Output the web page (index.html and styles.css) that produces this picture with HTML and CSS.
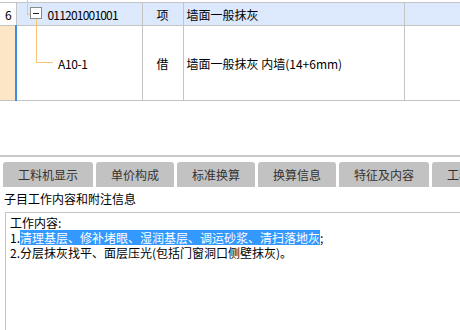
FILE: index.html
```html
<!DOCTYPE html>
<html lang="zh-CN">
<head>
    <meta charset="UTF-8">
    <title>子目工作内容</title>
    <link rel="stylesheet" href="styles.css">
</head>
<body>
    <div class="grid-wrap">
        <table class="grid">
            <colgroup>
                <col class="col-num">
                <col class="col-code">
                <col class="col-unit">
                <col class="col-name">
                <col>
            </colgroup>
            <tr class="row-item">
                <td class="num">6</td>
                <td class="code">
                    <span class="tree-up"></span>
                    <span class="toggle"></span>
                    <span class="code-text">011201001001</span>
                </td>
                <td class="unit">项</td>
                <td class="name">墙面一般抹灰</td>
                <td></td>
            </tr>
            <tr class="row-sub">
                <td class="num current"></td>
                <td class="code">
                    <span class="tree-down"></span>
                    <span class="sub-text">A10-1</span>
                </td>
                <td class="unit">借</td>
                <td class="name">墙面一般抹灰 内墙(14+6mm)</td>
                <td></td>
            </tr>
        </table>
    </div>

    <div class="splitter"></div>

    <div class="tabs">
        <div class="tab">工料机显示</div>
        <div class="tab">单价构成</div>
        <div class="tab">标准换算</div>
        <div class="tab">换算信息</div>
        <div class="tab">特征及内容</div>
        <div class="tab">工程量明细</div>
    </div>

    <div class="panel-title">子目工作内容和附注信息</div>

    <div class="memo">
        <div>工作内容:</div>
        <div>1.<span class="selected">清理基层、修补堵眼、湿润基层、调运砂浆、清扫落地灰</span>;</div>
        <div>2.分层抹灰找平、面层压光(包括门窗洞口侧壁抹灰)。</div>
    </div>
</body>
</html>
```

FILE: styles.css
```css
:root {
    --line-color: #c4c4c4;
    --tree-color: #f8c47c;
    --selected-row: #dce8fb;
    --current-cell: #fde6c6;
    --current-bar: #3a8ee6;
    --tab-bg: #c2c2c2;
}

html, body {
    margin: 0;
    padding: 0;
    background: white;
}

body {
    width: 460px;
    height: 330px;
    overflow: hidden;
    font-family: 'Noto Sans CJK SC', sans-serif;
    font-size: 12px;
    color: #000;
}

.grid-wrap {
    padding-top: 2px;
    height: 153px;
}

.grid {
    border-collapse: collapse;
    table-layout: fixed;
    width: 460px;
}

.col-num { width: 16px; }
.col-code { width: 126px; }
.col-unit { width: 41px; }
.col-name { width: 221px; }

.grid td {
    border: 1px solid var(--line-color);
    padding: 0;
    white-space: nowrap;
}

.grid td:first-child {
    border-left: none;
}

.grid td:last-child {
    border-right: none;
}

.row-item td {
    height: 22px;
    background: var(--selected-row);
}

.row-item td.num {
    background: white;
    padding-left: 5px;
}

.row-sub td {
    height: 74px;
}

.num.current {
    background: var(--current-cell);
    border-right: 2px solid var(--current-bar);
}

.code {
    position: relative;
}

.unit {
    text-align: center;
}

.grid td.name {
    padding-left: 3px;
}

.tree-up {
    position: absolute;
    left: 10px;
    top: -13px;
    width: 3px;
    height: 24px;
    border-left: 1px solid var(--tree-color);
    border-bottom: 1px solid var(--tree-color);
}

.toggle {
    position: absolute;
    left: 13px;
    top: 4px;
    width: 10px;
    height: 10px;
    border: 1px solid #8a8a8a;
    background: white;
}

.toggle::after {
    content: "";
    position: absolute;
    left: 2px;
    top: 5px;
    width: 6px;
    height: 1px;
    background: #222;
}

.code-text {
    margin-left: 31px;
    letter-spacing: -0.8px;
}

.tree-down {
    position: absolute;
    left: 19px;
    top: -7px;
    width: 16px;
    height: 43px;
    border-left: 1px solid var(--tree-color);
    border-bottom: 1px solid var(--tree-color);
}

.sub-text {
    margin-left: 41px;
    letter-spacing: -0.4px;
}

.splitter {
    height: 2px;
    background: #c8c8c8;
}

.tabs {
    display: flex;
    gap: 3px;
    margin-top: 5px;
    padding-left: 3px;
    overflow: hidden;
}

.tab {
    flex: none;
    height: 25px;
    line-height: 25px;
    padding: 0 15px;
    background: var(--tab-bg);
    border-radius: 3px 3px 0 0;
    color: #333;
    white-space: nowrap;
}

.panel-title {
    height: 25px;
    line-height: 24px;
    padding-left: 4px;
}

.memo {
    margin-left: 5px;
    border-top: 1px solid var(--line-color);
    border-left: 1px solid var(--line-color);
    height: 115px;
    padding: 2px 0 0 4px;
    line-height: 15px;
    white-space: nowrap;
    overflow: hidden;
}

.selected {
    display: inline-block;
    line-height: 15px;
    background: #3399ff;
    color: white;
}
```
